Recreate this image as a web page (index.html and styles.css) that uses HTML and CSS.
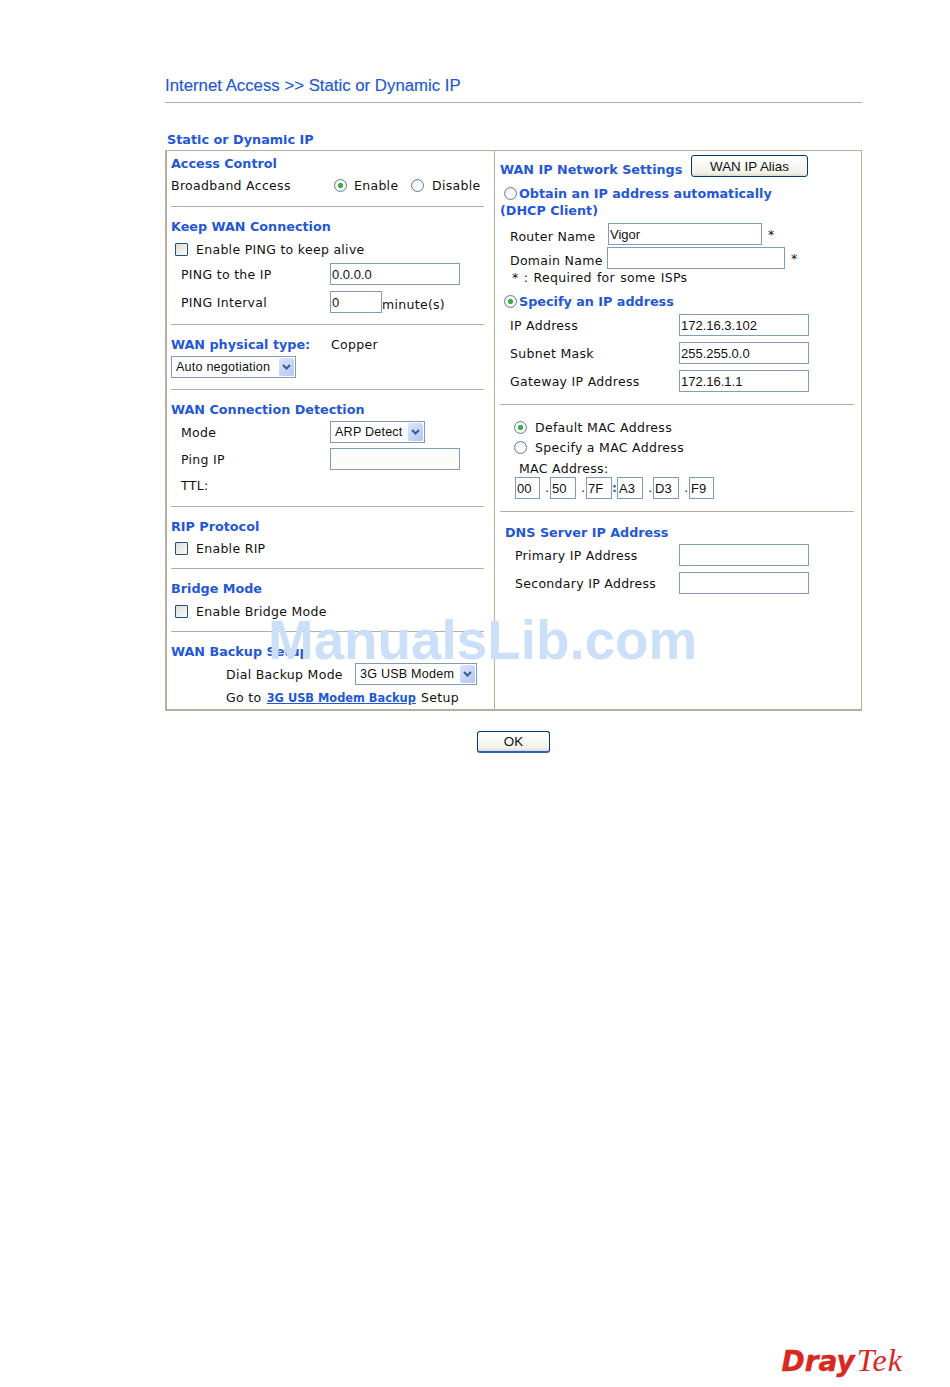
FILE: index.html
```html
<!DOCTYPE html>
<html lang="en">
<head>
<meta charset="utf-8">
<title>Static or Dynamic IP</title>
<link rel="stylesheet" href="styles.css">
</head>
<body>
<div class="page">
  <h1 class="title">Internet Access &gt;&gt; Static or Dynamic IP</h1>
  <h2 class="caption">Static or Dynamic IP</h2>
  <div class="panel">
    <div class="col-left">
      <section class="sec s1">
        <div class="row"><h3>Access Control</h3></div>
        <div class="row">
          <span class="lab w163">Broadband Access</span>
          <input class="radio" type="radio" name="ba" checked><span class="lab w-en">Enable</span>
          <input class="radio" type="radio" name="ba"><span class="lab gap6">Disable</span>
        </div>
      </section>
      <section class="sec s2">
        <div class="row"><h3>Keep WAN Connection</h3></div>
        <div class="row m1 ind4"><input class="check" type="checkbox"><span class="lab gap7">Enable PING to keep alive</span></div>
        <div class="row m3 ind10"><span class="lab w149">PING to the IP</span><input class="text w130" type="text" value="0.0.0.0"></div>
        <div class="row m6 ind10"><span class="lab w149">PING Interval</span><input class="text w52" type="text" value="0"><span class="lab low">minute(s)</span></div>
      </section>
      <section class="sec s3">
        <div class="row"><h3 class="w160">WAN physical type:</h3><span class="lab">Copper</span></div>
        <div class="row m1"><div class="select w125"><span>Auto negotiation</span><i class="arrow"><svg viewBox="0 0 15 18" width="15" height="18"><path d="M4 7l3.5 3.5L11 7" fill="none" stroke="#3d5a8c" stroke-width="2"/></svg></i></div></div>
      </section>
      <section class="sec s4">
        <div class="row"><h3>WAN Connection Detection</h3></div>
        <div class="row m1 ind10"><span class="lab w149">Mode</span><div class="select w95"><span>ARP Detect</span><i class="arrow"><svg viewBox="0 0 15 18" width="15" height="18"><path d="M4 7l3.5 3.5L11 7" fill="none" stroke="#3d5a8c" stroke-width="2"/></svg></i></div></div>
        <div class="row m5 ind10"><span class="lab w149">Ping IP</span><input class="text w130 off" type="text"></div>
        <div class="row m4 ind10"><span class="lab">TTL:</span></div>
      </section>
      <section class="sec s5">
        <div class="row"><h3>RIP Protocol</h3></div>
        <div class="row ind4"><input class="check" type="checkbox"><span class="lab gap7">Enable RIP</span></div>
      </section>
      <section class="sec s6">
        <div class="row"><h3>Bridge Mode</h3></div>
        <div class="row m1 ind4"><input class="check" type="checkbox"><span class="lab gap7">Enable Bridge Mode</span></div>
      </section>
      <section class="sec s7">
        <div class="row"><h3>WAN Backup Setup</h3></div>
        <div class="row m1 ind55"><span class="lab w129">Dial Backup Mode</span><div class="select w122"><span>3G USB Modem</span><i class="arrow"><svg viewBox="0 0 15 18" width="15" height="18"><path d="M4 7l3.5 3.5L11 7" fill="none" stroke="#3d5a8c" stroke-width="2"/></svg></i></div></div>
        <div class="row m1 ind55"><span class="lab">Go to <a href="#">3G USB Modem Backup</a> Setup</span></div>
      </section>
    </div>
    <div class="col-right">
      <section class="sec r1">
        <div class="row">
          <h3 class="w190 down">WAN IP Network Settings</h3>
          <button class="btn alias" type="button">WAN IP Alias</button>
        </div>
        <div class="head-radio m8">
          <input class="radio r-head" type="radio" name="ip"><h3>Obtain an IP address automatically</h3>
        </div>
        <div class="head-radio"><h3>(DHCP Client)</h3></div>
        <div class="row m4 ind10"><span class="lab w98 down2">Router Name</span><input class="text w154" type="text" value="Vigor"><span class="lab star">*</span></div>
        <div class="row m2 ind10"><span class="lab w97 down2">Domain Name</span><input class="text w178" type="text"><span class="lab star">*</span></div>
        <div class="row short ind10"><span class="lab req">* : Required for some ISPs</span></div>
        <div class="row m5"><input class="radio r-head" type="radio" name="ip" checked><h3>Specify an IP address</h3></div>
        <div class="row m2 ind10"><span class="lab w169">IP Address</span><input class="text w130" type="text" value="172.16.3.102"></div>
        <div class="row m6 ind10"><span class="lab w169">Subnet Mask</span><input class="text w130" type="text" value="255.255.0.0"></div>
        <div class="row m6 ind10"><span class="lab w169">Gateway IP Address</span><input class="text w130" type="text" value="172.16.1.1"></div>
      </section>
      <section class="sec r2">
        <div class="row short ind14"><input class="radio" type="radio" name="mac" checked><span class="lab gap7">Default MAC Address</span></div>
        <div class="row short m2 ind14"><input class="radio" type="radio" name="mac"><span class="lab gap7">Specify a MAC Address</span></div>
        <div class="row short m3 ind19"><span class="lab">MAC Address:</span></div>
        <div class="row ind15 mac">
          <input class="text w25" type="text" value="00"><b class="sep">.</b>
          <input class="text w26" type="text" value="50"><b class="sep">.</b>
          <input class="text w26" type="text" value="7F"><b class="sep colon">:</b>
          <input class="text w26" type="text" value="A3"><b class="sep">.</b>
          <input class="text w26" type="text" value="D3"><b class="sep">.</b>
          <input class="text w25" type="text" value="F9">
        </div>
      </section>
      <section class="sec r3">
        <div class="row ind5"><h3>DNS Server IP Address</h3></div>
        <div class="row m1 ind15"><span class="lab w164">Primary IP Address</span><input class="text w130" type="text"></div>
        <div class="row m6 ind15"><span class="lab w164">Secondary IP Address</span><input class="text w130" type="text"></div>
      </section>
    </div>
  </div>
  <div class="actions"><button class="btn ok" type="button">OK</button></div>
  <div class="logo"><span class="dray">Dray</span><span class="tek">Tek</span></div>
  <div class="watermark">ManualsLib.com</div>
</div>
</body>
</html>
```
FILE: styles.css
```css
* { box-sizing: border-box; }
html, body { margin: 0; padding: 0; background: #fff; }
body { font-family: "DejaVu Sans", Verdana, sans-serif; color: #111; }
.page { position: relative; width: 950px; height: 1387px; padding: 0 88px 7px 165px; display: flex; flex-direction: column; overflow: hidden; }
h1, h2, h3 { margin: 0; }
.title { height: 103px; padding-top: 76px; border-bottom: 1px solid #b3b09f; font: 400 16.8px/20px "Liberation Sans", Arial, sans-serif; color: #2357d6; -webkit-text-stroke: 0.15px #2357d6; }
.caption { margin-top: 28px; height: 19px; padding-left: 2px; font: 700 12.8px/17px "DejaVu Sans", Verdana, sans-serif; color: #2357d6; }
.panel { display: flex; width: 697px; height: 561px; border: 1px solid #b3b09f; border-width: 1px 2px 2px 2px; border-right-width: 1px; }
.col-left { width: 328px; padding: 0 10px 0 4px; border-right: 1px solid #b3b09f; }
.col-right { flex: 1; padding: 0 7px 0 5px; }
.sec { border-bottom: 1px solid #b3b09f; }
.s1 { padding: 1px 0 10px; }
.s2, .s3 { padding: 8px 0 11px; }
.s4 { padding: 8px 0 10px; }
.s5, .s6 { padding: 8px 0 9px; }
.s7 { padding: 8px 0 0; border: 0; }
.r1 { padding: 4px 0 12px; }
.r2 { padding: 13px 0 12px; }
.r3 { padding: 9px 0 0; border: 0; }
.row { display: flex; align-items: center; height: 22px; white-space: nowrap; }
.row.short { height: 16px; }
.r2 .row.short { height: 18px; }
.m1 { margin-top: 1px; } .m2 { margin-top: 2px; } .m3 { margin-top: 3px; } .m4 { margin-top: 4px; }
.m5 { margin-top: 5px; } .m6 { margin-top: 6px; } .m8 { margin-top: 8px; }
.ind4 { padding-left: 4px; } .ind5 { padding-left: 5px; } .ind10 { padding-left: 10px; } .ind14 { padding-left: 14px; }
.ind15 { padding-left: 15px; } .ind19 { padding-left: 19px; } .ind55 { padding-left: 55px; }
h3 { font: 700 12.75px/17px "DejaVu Sans", Verdana, sans-serif; color: #2357d6; }
.lab { font-size: 12.5px; letter-spacing: 0.3px; color: #111; }
.req { margin-left: 2px; word-spacing: 1px; }
.w163 { width: 163px; } .w149 { width: 149px; } .w129 { width: 129px; } .w160 { width: 160px; } .w190 { width: 190px; }
.w98 { width: 98px; } .w97 { width: 97px; } .w169 { width: 169px; } .w164 { width: 164px; }
.w-en { width: 57px; margin-left: 7px; }
.gap6 { margin-left: 8px; } .gap7 { margin-left: 8px; }
.low { position: relative; top: 2px; }
.down { margin-top: 6px; }
.down2 { margin-top: 4px; }
.star { margin-left: 6px; }
.text { height: 22px; padding: 0 1px; border: 1px solid #7f9db9; border-radius: 0; background: #fff; outline: 0; font: 13px "Liberation Sans", Arial, sans-serif; color: #111; }
.text.off { background: #fbfbf8; }
.w130 { width: 130px; } .w52 { width: 52px; } .w154 { width: 154px; } .w178 { width: 178px; } .w25 { width: 25px; } .w26 { width: 26px; }
.radio { appearance: none; -webkit-appearance: none; width: 13px; height: 13px; margin: 0; flex: none; border: 1px solid #5d7f9f; border-radius: 50%; background: radial-gradient(circle at 60% 60%, #fff 30%, #dcdcd4 100%); }
.radio:checked { background: radial-gradient(circle, #3fae49 0 2.3px, #fff 3px, #e4e4dc 100%); }
.r-head { margin: 0 2px 0 4px; }
.check { appearance: none; -webkit-appearance: none; width: 13px; height: 13px; margin: 0; flex: none; border: 1px solid #1c5180; border-radius: 1px; background: linear-gradient(135deg, #dcdcd7, #fbfbf9); }
.head-radio { display: flex; align-items: center; height: 17px; white-space: nowrap; }
.select { display: flex; align-items: center; justify-content: space-between; height: 22px; padding: 1px 1px 1px 4px; border: 1px solid #7f9db9; background: #fff; font: 12.6px "Liberation Sans", Arial, sans-serif; letter-spacing: 0.2px; color: #111; }
.w125 { width: 125px; } .w95 { width: 95px; } .w122 { width: 122px; }
.arrow { display: block; flex: none; width: 15px; height: 18px; border-radius: 2px; background: linear-gradient(135deg, #dbe5fb, #b3c7f4); }
.arrow svg { display: block; }
a { margin: 0 1px; font-size: 11.4px; font-weight: 700; letter-spacing: 0; color: #2357d6; text-decoration: underline; }
.mac { gap: 0; }
.sep { width: 10px; padding-right: 1px; text-align: right; font-size: 12px; color: #2357d6; }
.sep:not(.colon) { color: #111; font-weight: 400; }
.colon { width: 5px; padding: 0; text-align: center; }
.btn { height: 22px; padding: 0; border: 1px solid #003c74; border-radius: 3px; background: linear-gradient(#fff, #f2f2ea 85%, #dcd8c8); font: 13.4px "Liberation Sans", Arial, sans-serif; color: #111; }
.alias { width: 117px; margin-left: 1px; }
.actions { display: flex; justify-content: center; padding: 20px 0 0 0; }
.ok { width: 73px; border-width: 1px 1px 2px; border-color: #003c74 #003c74 #2c5fc0; }
.logo { margin-top: auto; align-self: flex-end; margin-right: -41px; height: 40px; line-height: 40px; color: #d8281f; white-space: nowrap; }
.dray { font: italic 700 28px/40px "DejaVu Sans", Verdana, sans-serif; -webkit-text-stroke: 0.4px #d8281f; }
.tek { margin-left: 2px; font: italic 400 32px/40px "Liberation Serif", "Times New Roman", serif; letter-spacing: 1px; }
.watermark { position: absolute; left: 268px; top: 607px; font: 700 54.8px/66px "Liberation Sans", Arial, sans-serif; color: #cbdff9; white-space: nowrap; }
```
